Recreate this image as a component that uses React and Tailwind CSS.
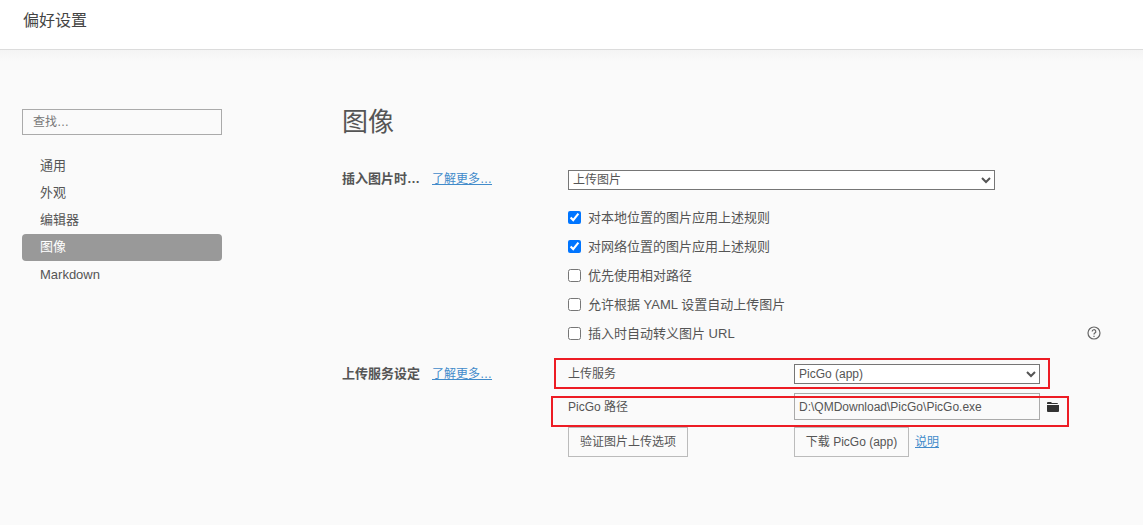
const NAV_ITEMS = ["通用", "外观", "编辑器", "图像", "Markdown"];
const IMAGE_OPTIONS = [
  { label: "对本地位置的图片应用上述规则", checked: true },
  { label: "对网络位置的图片应用上述规则", checked: true },
  { label: "优先使用相对路径", checked: false },
  { label: "允许根据 YAML 设置自动上传图片", checked: false },
  { label: "插入时自动转义图片 URL", checked: false },
];

function LearnMore() {
  return <a className="ml-[12px] text-[12px] text-[#428bca] underline" href="#more">了解更多…</a>;
}

function CheckRow({ label, checked }) {
  return (
    <label className="flex h-[29px] items-center">
      <input className="m-0 h-[13px] w-[13px] accent-[#0075ff]" defaultChecked={checked} type="checkbox" />
      <span className="ml-[7px]">{label}</span>
    </label>
  );
}

function FolderIcon() {
  return (
    <svg className="ml-[7px]" fill="#333" height="10" viewBox="0 0 12 10" width="12">
      <path d="M0 2V1a1 1 0 0 1 1-1h3l1 1h5a1 1 0 0 1 1 1z" />
      <path d="M0 3h12v6a1 1 0 0 1-1 1H1a1 1 0 0 1-1-1z" />
    </svg>
  );
}

function HelpIcon() {
  return (
    <svg fill="none" height="14" stroke="#666" viewBox="0 0 14 14" width="14">
      <circle cx="7" cy="7" r="6" strokeWidth="1.2" />
      <path d="M5.2 5.6a1.8 1.8 0 1 1 2.7 1.5c-.6.4-.9.7-.9 1.4" strokeWidth="1.2" />
      <path d="M7 9.8v1.2" strokeWidth="1.2" />
    </svg>
  );
}

export default function App() {
  return (
    <div className="relative h-[525px] w-[1143px] overflow-hidden bg-[#fafafa] text-[13px] text-[#555] [font-family:'Liberation_Sans','Noto_Sans_CJK_SC',sans-serif]">
      <header className="flex h-[50px] items-start border-b border-[#dcdcdc] bg-white pl-[23px] pt-[11px] text-[16px] leading-[20px] text-[#444]">
        偏好设置
      </header>
      <div className="h-[12px] bg-gradient-to-b from-[#f4f4f4] to-[#fafafa]" />

      <div className="flex">
        <aside className="ml-[22px] w-[200px] pt-[47px]">
          <input
            className="block h-[26px] w-full border border-[#aaa] bg-transparent px-[10px] text-[12px] outline-none placeholder:text-[#777]"
            placeholder="查找…"
            type="text"
          />
          <nav className="mt-[18px]">
            {NAV_ITEMS.map((item) => (
              <div
                className={`flex h-[27px] items-center rounded-[4px] pl-[18px] ${
                  item === "图像" ? "bg-[#999] text-white" : "text-[#555]"
                } ${item === "Markdown" ? "" : "pb-[2px]"}`}
                key={item}
              >
                {item}
              </div>
            ))}
          </nav>
        </aside>

        <main className="ml-[120px] flex-1">
          <h1 className="mt-[42px] text-[26px] font-normal leading-[36px] text-[#555]">图像</h1>

          <section className="mt-[30px] flex">
            <div className="w-[226px] leading-[18px]">
              <span className="font-bold">插入图片时…</span>
              <LearnMore />
            </div>
            <div className="w-[427px]">
              <select className="block h-[20px] w-full rounded-none border border-[#767676] bg-white text-[12px] leading-[18px] outline-none">
                <option>上传图片</option>
              </select>
              <div className="mt-[13px]">
                {IMAGE_OPTIONS.map((option) => (
                  <CheckRow checked={option.checked} key={option.label} label={option.label} />
                ))}
              </div>
            </div>
            <div className="ml-[92px] flex items-end pb-[8px]">
              <HelpIcon />
            </div>
          </section>

          <section className="mt-[16px] flex">
            <div className="w-[226px] pt-[1px] leading-[18px]">
              <span className="font-bold">上传服务设定</span>
              <LearnMore />
            </div>
            <div className="text-[12px]">
              <div className="flex h-[20px] items-center">
                <span className="w-[226px]">上传服务</span>
                <select className="block h-[20px] w-[246px] rounded-none border border-[#767676] bg-white text-[12px] outline-none">
                  <option>PicGo (app)</option>
                </select>
              </div>
              <div className="mt-[9px] flex h-[27px] items-center">
                <span className="w-[226px]">PicGo 路径</span>
                <input
                  className="h-[27px] w-[246px] border border-[#aaa] bg-transparent px-[4px] text-[12px] text-[#555] outline-none"
                  defaultValue="D:\QMDownload\PicGo\PicGo.exe"
                  type="text"
                />
                <FolderIcon />
              </div>
              <div className="mt-[7px] flex h-[30px] items-center">
                <div className="w-[226px]">
                  <button className="h-[30px] w-[120px] border border-[#bbb] text-[12px]" type="button">
                    验证图片上传选项
                  </button>
                </div>
                <button className="h-[30px] w-[115px] border border-[#bbb] text-[12px]" type="button">
                  下载 PicGo (app)
                </button>
                <a className="ml-[6px] text-[#428bca] underline" href="#help">说明</a>
              </div>
            </div>
          </section>
        </main>
      </div>

      <div className="absolute left-[554px] top-[358px] h-[31px] w-[496px] border-2 border-[#ed1c24]" />
      <div className="absolute left-[551px] top-[396px] h-[31px] w-[518px] border-2 border-[#ed1c24]" />
    </div>
  );
}
